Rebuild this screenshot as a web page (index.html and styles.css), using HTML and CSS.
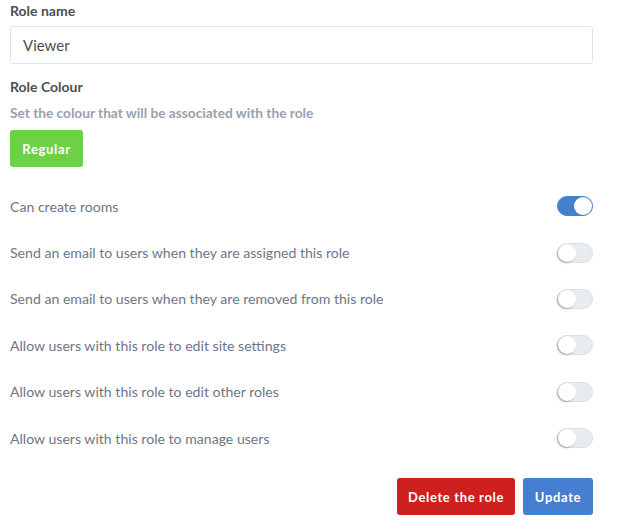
FILE: index.html
```html
<!DOCTYPE html>
<html>
<head>
<meta charset="utf-8">
<link rel="stylesheet" href="styles.css">
</head>
<body>
<div class="form">
  <div class="group">
    <label class="label">Role name</label>
    <div class="input">Viewer</div>
  </div>
  <div class="group colour">
    <label class="label">Role Colour</label>
    <div class="hint">Set the colour that will be associated with the role</div>
    <button class="btn btn-green">Regular</button>
  </div>
  <div class="rows">
    <div class="row"><span>Can create rooms</span><span class="switch on"></span></div>
    <div class="row"><span>Send an email to users when they are assigned this role</span><span class="switch"></span></div>
    <div class="row"><span>Send an email to users when they are removed from this role</span><span class="switch"></span></div>
    <div class="row"><span>Allow users with this role to edit site settings</span><span class="switch"></span></div>
    <div class="row"><span>Allow users with this role to edit other roles</span><span class="switch"></span></div>
    <div class="row"><span>Allow users with this role to manage users</span><span class="switch"></span></div>
  </div>
  <div class="actions">
    <button class="btn btn-red">Delete the role</button>
    <button class="btn btn-blue">Update</button>
  </div>
</div>
</body>
</html>
```
FILE: styles.css
```css
html, body {
  margin: 0;
  padding: 0;
  background: #fff;
}
body {
  font-family: "Lato", "Liberation Sans", sans-serif;
  color: #495057;
}
.form {
  width: 583px;
  margin-left: 10px;
  padding-top: 2px;
}
.label {
  display: block;
  font-size: 14px;
  font-weight: 700;
  color: #495057;
  line-height: 18px;
  margin-bottom: 6px;
}
.input {
  box-sizing: border-box;
  height: 38px;
  border: 1px solid #e0e5ec;
  border-radius: 3px;
  padding: 0 12px;
  font-size: 15px;
  line-height: 36px;
  color: #495057;
}
.colour {
  margin-top: 14px;
}
.colour .label {
  margin-bottom: 9px;
}
.hint {
  font-size: 13.7px;
  font-weight: 700;
  color: #9aa0ac;
  line-height: 16px;
  margin-bottom: 9px;
}
.btn {
  display: inline-block;
  border: none;
  border-radius: 3px;
  height: 37px;
  padding: 0;
  font-family: "Lato", "Liberation Sans", sans-serif;
  font-size: 13px;
  font-weight: 700;
  letter-spacing: 0.05em;
  color: #fff;
}
.btn-green { background: #6cd145; width: 73px; }
.btn-red { background: #cd201f; width: 118px; }
.btn-blue { background: #467fcf; width: 70px; }
.rows {
  margin-top: 16px;
}
.row {
  height: 46.4px;
  display: flex;
  align-items: center;
  justify-content: space-between;
  font-size: 14.1px;
  color: #6e7687;
}
.switch {
  position: relative;
  box-sizing: border-box;
  width: 36px;
  height: 20px;
  border-radius: 10px;
  background: #e9ecef;
  border: 1px solid #dadee8;
}
.switch::after {
  content: "";
  position: absolute;
  top: 0;
  left: 0;
  width: 18px;
  height: 18px;
  border-radius: 50%;
  background: #fff;
  box-shadow: -1px 1px 2px rgba(0,0,0,0.3);
}
.switch.on {
  background: #467fcf;
  border-color: #467fcf;
}
.switch.on::after {
  left: 16px;
  box-shadow: none;
}
.actions {
  display: flex;
  justify-content: flex-end;
  gap: 8px;
  margin-top: 17px;
}
```
